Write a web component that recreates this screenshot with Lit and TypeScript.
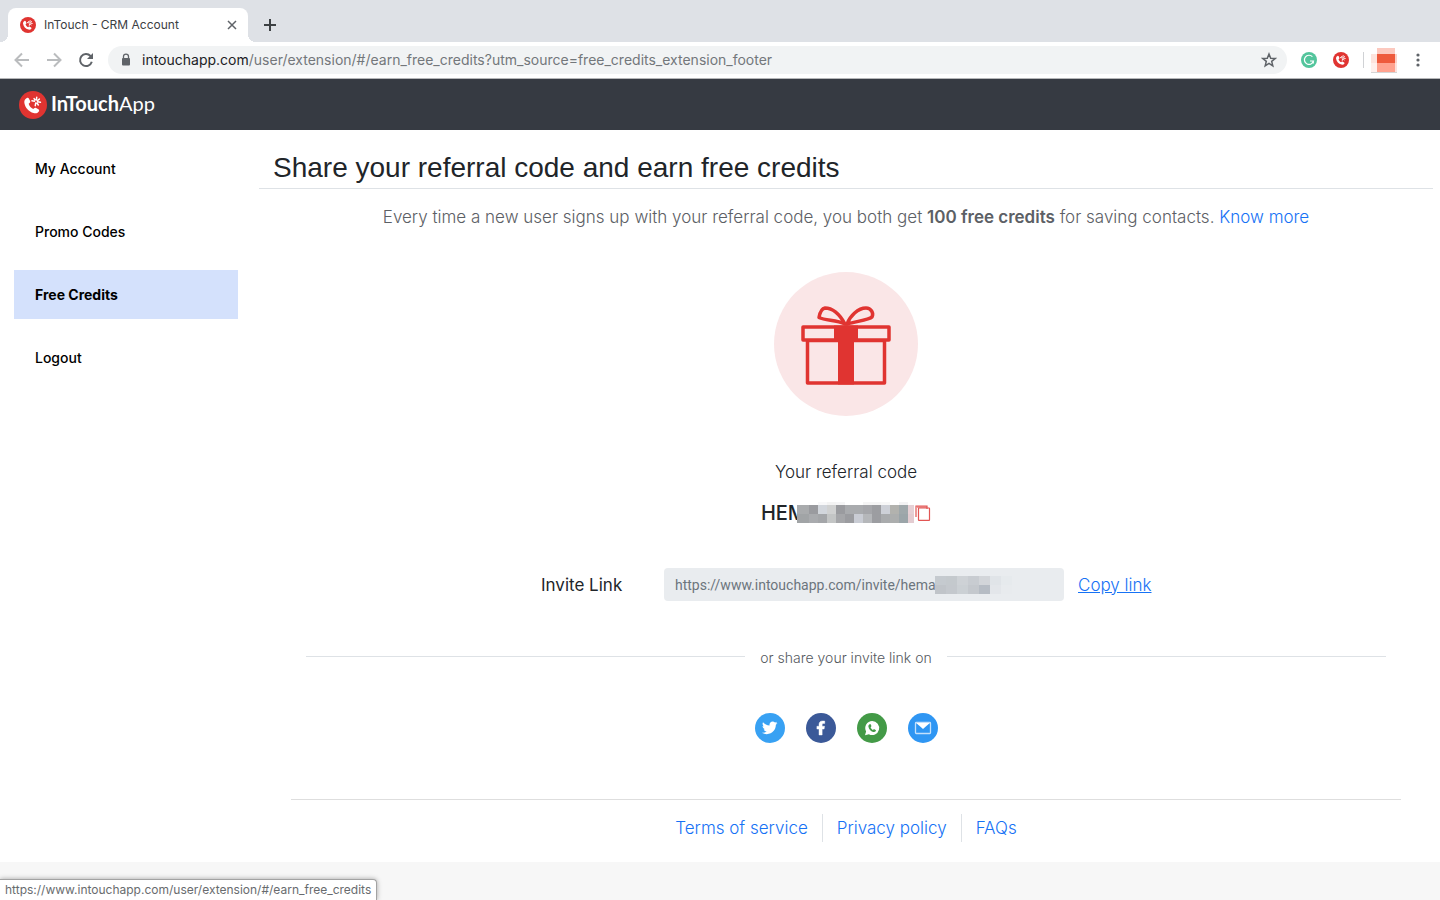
import { LitElement, html, svg, css } from "lit";
import { customElement, property } from "lit/decorators.js";

const HANDSET =
  "M6.2 3.2c1.3-.6 2.1-.2 2.600.9l1.300 2.900c.4 1 .2 1.700-.6 2.400l-1.100.9c1 3 2.700 4.900 5.400 6.200l1.100-1c.8-.7 1.500-.8 2.400-.3l2.700 1.600c1 .6 1.200 1.500.5 2.500-1.400 2-3.600 2.800-6.300 2C8.500 19.700 4.300 15.100 3.300 9.300c-.4-2.700.6-4.900 2.900-6.100z";

@customElement("touch-mark")
export class TouchMark extends LitElement {
  static styles = css`
    :host { display: block; flex: none; width: 16px; height: 16px; }
    :host([large]) { width: 28px; height: 28px; }
    .mark { display: block; width: 100%; height: 100%; }
  `;
  render() {
    return html`<svg class="mark" viewBox="0 0 28 28" aria-hidden="true">
      <circle cx="14" cy="14" r="14" fill="#e03431" />
      <path transform="translate(2.600 4.200) scale(.84)" fill="#fff" d=${HANDSET} />
      <g transform="rotate(10 17 10.500)" stroke="#fff" stroke-width="1.500" stroke-linecap="round">
        <path d="M17 6.200v2.800M17 12v2.800M12.900 10.500h2.600M18.500 10.500h3M18.400 9l1.500-1.500M18.400 12l1.500 1.500M15.600 9l-1-1" />
      </g>
    </svg>`;
  }
}

@customElement("pixel-mosaic")
export class PixelMosaic extends LitElement {
  static styles = css`
    :host { display: block; }
    .cells { display: grid; width: 100%; height: 100%; }
  `;
  @property({ attribute: false }) rows: string[][] = [];
  @property() columns = "";
  @property() tracks = "";
  render() {
    return html`<div
      class="cells"
      style="grid-template-columns:${this.columns};grid-template-rows:${this.tracks}"
    >
      ${this.rows.flat().map((c) => html`<i style="background:${c}"></i>`)}
    </div>`;
  }
}

const CODE_CELLS = [
  ["#fff", "#fff", "#f8f8f9", "#f3f3f3", "#f5f5f6", "#fff", "#fff", "#f5f5f5", "#f5f5f5", "#f7f7f7", "#fff", "#f3f3f4", "#fff"],
  ["#a9abad", "#9a9b9f", "#d2d6dc", "#d0d1d1", "#9a9b9f", "#a9abae", "#a9abae", "#a5a6aa", "#9c9da1", "#cdd0d7", "#b2b2ae", "#9fa8ab", "#e6d0d5"],
  ["#a1a4a6", "#a9abae", "#a4a6a9", "#c3c5c5", "#a5a6a9", "#9b9ca0", "#c9ccd4", "#b5b7ba", "#9c9da1", "#a9abad", "#acaeae", "#9ba5a9", "#e3ccd1"],
];
const LINK_CELLS = [
  ["#c5cacf", "#c4c9cd", "#ced2d6", "#c8ccd1", "#d2d5d9", "#e0e4e8", "#e6eaed", "#e9ecef"],
  ["#c0c4c9", "#c4c8cd", "#cbd0d4", "#c4c8cd", "#b6bcc4", "#e3e6ea", "#e8ebee", "#e9ecef"],
];
const AVATAR_CELLS = [
  ["#fff", "#fcc9bf", "#fcc9bf", "#fff"],
  ["#fde3dd", "#ee5a3c", "#ee5a3c", "#fbd0c7"],
  ["#fff0ed", "#ffa28f", "#ffa28f", "#fde1dc"],
];

const SHARES = [
  { name: "Twitter", color: "#38a1f3", icon: svg`<path fill="#fff" transform="translate(5.800 5.600) scale(.74)" d="M22.460 6c-.77.35-1.600.58-2.460.69.88-.53 1.560-1.370 1.880-2.380-.83.5-1.750.85-2.720 1.050C18.370 4.500 17.260 4 16 4c-2.350 0-4.270 1.920-4.270 4.290 0 .34.04.67.11.98C8.280 9.090 5.110 7.380 3 4.790c-.37.63-.58 1.370-.58 2.150 0 1.490.75 2.810 1.910 3.560-.71 0-1.370-.2-1.950-.5v.03c0 2.080 1.480 3.820 3.440 4.210a4.220 4.220 0 0 1-1.930.07 4.280 4.280 0 0 0 4 2.980 8.521 8.521 0 0 1-5.330 1.840c-.34 0-.68-.02-1.020-.06C3.440 20.290 5.700 21 8.120 21 16 21 20.330 14.460 20.330 8.790c0-.19 0-.37-.01-.56.84-.6 1.560-1.360 2.140-2.230z"/>` },
  { name: "Facebook", color: "#3b5998", icon: svg`<path fill="#fff" stroke="#fff" stroke-width=".6" transform="translate(6 6.600) scale(.7)" d="M14.500 13.500h2.800l.7-4h-3.500v-2c0-1.030.3-2 2-2h1.700V2.140C17.700 2.040 16.500 2 15.300 2 12.100 2 10 3.657 10 6.700v2.800H7v4h3V22h4.500v-8.500z"/>` },
  { name: "WhatsApp", color: "#439a47", icon: svg`<path fill="#fff" d="M15.200 8a7 7 0 1 1-3.300 13.200L8 22.200l1.100-3.800A7 7 0 0 1 15.200 8z"/><path fill="#439a47" transform="translate(10 9.800) scale(.43)" d=${HANDSET} />` },
  { name: "Email", color: "#2f96f3", icon: svg`<rect x="7.500" y="9.500" width="15" height="11" rx=".8" fill="none" stroke="#c3e0fc" stroke-width="1.300"/><path fill="#fff" d="M8.200 10.100h13.600L15 16z"/>` },
];

@customElement("app-root")
export class AppRoot extends LitElement {
  static styles = css`
    :host {
      display: flex;
      flex-direction: column;
      position: relative;
      min-height: 100vh;
      background: #f7f7f7;
      color: #212529;
      font: 400 17px/24px Inter, "Liberation Sans", sans-serif;
    }
    * { box-sizing: border-box; }
    a { color: #1672f5; text-decoration: none; }
    button { border: 0; padding: 0; background: none; font: inherit; color: inherit; display: block; flex: none; }
    svg { display: block; }

    .tabs { display: flex; height: 42px; padding: 8px 0 0 8px; background: #dee1e6; }
    .tab { position: relative; display: flex; align-items: center; width: 240px; padding: 0 11px 0 12px; border-radius: 8px 8px 0 0; background: #fff; font-size: 12px; line-height: 16px; color: #3c4043; }
    .tab::before, .tab::after { content: ""; position: absolute; bottom: 0; width: 8px; height: 8px; }
    .tab::before { left: -8px; background: radial-gradient(circle at 0 0, #dee1e6 8px, #fff 8px); }
    .tab::after { right: -8px; background: radial-gradient(circle at 100% 0, #dee1e6 8px, #fff 8px); }
    .tab-title { flex: 1; margin-left: 8px; }
    .new-tab { margin-left: 15px; align-self: center; }
    .toolbar { display: flex; align-items: center; height: 37px; padding: 0 15px 0 14px; border-bottom: 1px solid #b5b6b8; background: #fff; }
    .nav { display: flex; gap: 16px; }
    .omnibox { display: flex; align-items: center; flex: 1; height: 28px; margin-left: 14px; padding: 0 10px 0 12px; border-radius: 14px; background: #f1f3f4; }
    .address { flex: 1; margin: 0 10px; font-size: 14px; line-height: 20px; color: #73777b; }
    .host { color: #202124; }
    .extensions { display: flex; align-items: center; gap: 16px; margin-left: 14px; }
    .split { width: 1px; height: 16px; margin: 0 7px 0 14px; background: #d0d2d5; }
    .avatar { width: 26px; height: 25px; margin-right: 14px; border-bottom: 1px solid #d5d5d5; }

    .brand { display: flex; align-items: center; height: 51px; padding: 0 19px; background: #363a42; color: #fff; }
    .brand-name { margin-left: 4px; padding-bottom: 4px; font: 700 20px/24px Lato, sans-serif; }
    .brand-tail { font-weight: 400; }

    .page { display: flex; padding-bottom: 20px; background: #fff; }
    .sidebar { flex: none; width: 252px; padding: 14px; display: flex; flex-direction: column; gap: 14px; }
    .side-link { padding: 0 21px; font-size: 14px; line-height: 49px; font-weight: 500; color: #000; }
    .current { background: #d4e1fc; font-weight: 700; }
    .main { flex: 1; padding: 0 7px; min-width: 0; }
    .title { margin: 0; padding: 18px 14px 1px; border-bottom: 1px solid #dee2e6; font: 400 28px/39px "Liberation Sans", sans-serif; }
    .lead { margin: 16px 0 0; text-align: center; font-weight: 300; color: #5c6065; }
    .lead b { font-weight: 600; }
    .gift { margin: 43px auto 0; }
    .code-label { margin: 44px 0 0; text-align: center; font-weight: 300; }
    .code { display: flex; justify-content: center; align-items: center; height: 24px; margin-top: 17px; font-size: 20px; font-weight: 500; }
    .code-mask { z-index: 1; width: 117px; height: 21px; margin: 0 1px 2px -9px; }
    .invite { display: flex; justify-content: center; align-items: center; margin-top: 43px; }
    .invite-label { width: 123px; font-weight: 400; }
    .field { position: relative; width: 400px; }
    .link-input { display: block; width: 100%; height: 33px; padding: 0 11px; border: 0; border-radius: 4px; background: #e9ecef; color: #6c757d; font: 14px/20px Roboto, sans-serif; }
    .link-mask { position: absolute; left: 271px; top: 8px; width: 88px; height: 18px; }
    .copy { width: 73px; margin-left: 14px; text-decoration: underline; font-weight: 300; white-space: nowrap; }
    .or { display: flex; align-items: center; gap: 15px; margin: 45px 47px 0; font-size: 14px; font-weight: 300; color: #55595e; }
    .or::before, .or::after { content: ""; flex: 1; height: 1px; margin-bottom: 4px; background: #dee2e6; }
    .shares { display: flex; justify-content: center; gap: 21px; margin-top: 43px; }
    .footer { display: flex; justify-content: center; margin: 56px 32px 0; padding-top: 14px; border-top: 1px solid #dedede; font-weight: 300; }
    .foot-link { padding: 0 14px; line-height: 28px; }
    .foot-link + .foot-link { border-left: 1px solid #dee2e6; }

    .status { position: absolute; left: 0; bottom: 0; height: 21px; padding: 0 5px; border: 1px solid #a3a3a3; border-width: 1px 1px 0 0; border-radius: 0 4px 0 0; background: #fff; box-shadow: 0 0 5px rgba(0, 0, 0, 0.35); color: #686b6e; font-size: 12px; line-height: 20px; }
  `;

  render() {
    return html`
      <div class="tabs">
        <div class="tab">
          <touch-mark></touch-mark>
          <span class="tab-title">InTouch - CRM Account</span>
          <button aria-label="Close tab">
            <svg width="10" height="10" viewBox="0 0 10 10" stroke="#5f6368" stroke-width="1.500"><path d="M1 1l8 8M9 1L1 9" /></svg>
          </button>
        </div>
        <button class="new-tab" aria-label="New tab">
          <svg width="14" height="14" viewBox="0 0 14 14" stroke="#3c4043" stroke-width="2"><path d="M7 1v12M1 7h12" /></svg>
        </button>
      </div>
      <div class="toolbar">
        <div class="nav">
          <button aria-label="Back"><svg width="16" height="16" viewBox="0 0 16 16" fill="none" stroke="#babcbe" stroke-width="2"><path d="M15 8H2M8 1.500L1.500 8 8 14.500" /></svg></button>
          <button aria-label="Forward"><svg width="16" height="16" viewBox="0 0 16 16" fill="none" stroke="#babcbe" stroke-width="2"><path d="M1 8h13M8 1.500L14.500 8 8 14.500" /></svg></button>
          <button aria-label="Reload"><svg width="16" height="16" viewBox="0 0 16 16" fill="none" stroke="#5f6368" stroke-width="2"><path d="M13.800 9.800a6 6 0 1 1-1.300-5.800l1.500 1.700" /><path d="M15 1v6H9z" fill="#5f6368" stroke="none" /></svg></button>
        </div>
        <div class="omnibox">
          <svg width="12" height="14" viewBox="0 0 12 14"><path d="M3.500 6V3.600a2.500 2.500 0 0 1 5 0V6" fill="none" stroke="#5f6368" stroke-width="1.300" /><rect x="2" y="5" width="8" height="7.500" rx="1" fill="#5f6368" /></svg>
          <span class="address"><span class="host">intouchapp.com</span>/user/extension/#/earn_free_credits?utm_source=free_credits_extension_footer</span>
          <button aria-label="Bookmark this page"><svg width="16" height="16" viewBox="0 0 16 16" fill="none" stroke="#5f6368" stroke-width="1.500"><path d="M8 2l1.700 4.200 4.500.3-3.500 2.900 1.100 4.400L8 11.400l-3.800 2.400 1.100-4.400-3.500-2.900 4.500-.3z" /></svg></button>
        </div>
        <div class="extensions">
          <svg width="16" height="16" viewBox="0 0 16 16"><circle cx="8" cy="8" r="8" fill="#53c59c" /><path d="M11.400 4.700A4.600 4.600 0 1 0 12.500 9H9M12.300 8.500v3" fill="none" stroke="#fff" stroke-width="1.200" /></svg>
          <touch-mark></touch-mark>
        </div>
        <span class="split"></span>
        <pixel-mosaic class="avatar" columns="6px 9px 9px 2px" tracks="6px 9px 9px" .rows=${AVATAR_CELLS}></pixel-mosaic>
        <button aria-label="Menu"><svg width="14" height="14" viewBox="0 0 14 14" fill="#5f6368"><circle cx="7" cy="2" r="1.600" /><circle cx="7" cy="7" r="1.600" /><circle cx="7" cy="12" r="1.600" /></svg></button>
      </div>
      <header class="brand">
        <touch-mark large></touch-mark>
        <span class="brand-name">InTouch<span class="brand-tail">App</span></span>
      </header>
      <div class="page">
        <nav class="sidebar">
          <a class="side-link" href="#account">My Account</a>
          <a class="side-link" href="#promo">Promo Codes</a>
          <a class="side-link current" href="#credits">Free Credits</a>
          <a class="side-link" href="#logout">Logout</a>
        </nav>
        <main class="main">
          <h1 class="title">Share your referral code and earn free credits</h1>
          <p class="lead">Every time a new user signs up with your referral code, you both get <b>100 free credits</b> for saving contacts. <a href="#more">Know more</a></p>
          <svg class="gift" width="144" height="144" viewBox="0 0 144 144" aria-hidden="true">
            <circle cx="72" cy="72" r="72" fill="#fae6e7" />
            <g fill="none" stroke="#e03431" stroke-width="3.500" stroke-linejoin="round">
              <path d="M29 55h86v13H29zM33.500 68.500h77v42.500h-77z" />
              <path d="M71 52C66 43 59 36 51 36c-3 .5-5 4-6 9.500C52 49 62 47.500 71 52zM73 52c3-8 11-16 19-16 5 0 8 5 6 9-3 3-14 4-25 7z" />
            </g>
            <path d="M60 53.500h24V70h-4v42.500H64V70h-4z" fill="#e03431" />
          </svg>
          <p class="code-label">Your referral code</p>
          <div class="code">
            <span>HEM</span>
            <pixel-mosaic class="code-mask" columns="12px repeat(11, 9px) 6px" tracks="3px 9px 9px" .rows=${CODE_CELLS}></pixel-mosaic>
            <button aria-label="Copy referral code"><svg width="16" height="16" viewBox="0 0 16 16" fill="none" stroke="#e25553" stroke-width="1.200"><path d="M1 12V1h11v3" /><rect x="3.500" y="3" width="11" height="12.400" rx=".5" /><path d="M2 2h10" stroke-width="2" opacity=".6" /></svg></button>
          </div>
          <div class="invite">
            <label class="invite-label" for="invite-link">Invite Link</label>
            <div class="field">
              <input class="link-input" id="invite-link" readonly .value=${"https://www.intouchapp.com/invite/hema"} />
              <pixel-mosaic class="link-mask" columns="repeat(8, 11px)" tracks="9px 9px" .rows=${LINK_CELLS}></pixel-mosaic>
            </div>
            <a class="copy" href="#copy">Copy link</a>
          </div>
          <div class="or">or share your invite link on</div>
          <div class="shares">
            ${SHARES.map(
              (s) => html`<button aria-label=${s.name}><svg width="30" height="30" viewBox="0 0 30 30"><circle cx="15" cy="15" r="15" fill=${s.color} />${s.icon}</svg></button>`
            )}
          </div>
          <footer class="footer">
            <a class="foot-link" href="#terms">Terms of service</a>
            <a class="foot-link" href="#privacy">Privacy policy</a>
            <a class="foot-link" href="#faqs">FAQs</a>
          </footer>
        </main>
      </div>
      <div class="status">https://www.intouchapp.com/user/extension/#/earn_free_credits</div>
    `;
  }
}
